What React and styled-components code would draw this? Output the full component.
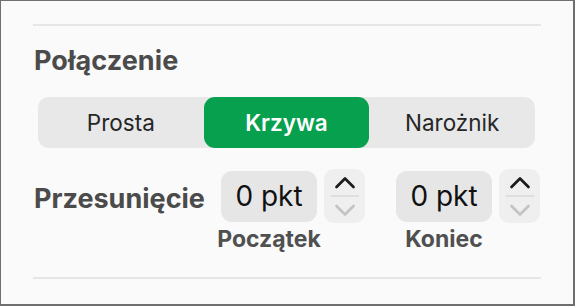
import React, { useState } from "react";
import styled, { createGlobalStyle } from "styled-components";

const GlobalStyle = createGlobalStyle`
  html, body {
    margin: 0;
    padding: 0;
    background: #fafafa;
  }
  * {
    box-sizing: border-box;
  }
`;

const Panel = styled.div`
  width: 575px;
  height: 306px;
  background: #fafafa;
  border: 1px solid #6f6f6f;
  border-right-width: 2px;
  border-bottom-width: 2px;
  padding: 23px 32px 0 32px;
  display: flex;
  flex-direction: column;
  font-family: Inter, "Noto Sans", sans-serif;
`;

const Divider = styled.div`
  height: 2px;
  background: #e6e6e6;
  margin-top: ${(p) => p.$top || 0}px;
`;

const Title = styled.h2`
  margin: 19px 0 0 1px;
  font-size: 27px;
  line-height: 32px;
  font-weight: 700;
  color: #4b4b4b;
  letter-spacing: 0.1px;
`;

const Segmented = styled.div`
  margin: 20px 6px 0 5px;
  height: 51px;
  display: grid;
  grid-template-columns: repeat(3, 1fr);
  background: #e8e8e8;
  border-radius: 11px;
`;

const Segment = styled.button`
  border: none;
  margin: 0;
  padding: 0;
  font-family: inherit;
  font-size: 22.5px;
  font-weight: ${(p) => (p.$active ? 600 : 400)};
  color: ${(p) => (p.$active ? "#ffffff" : "#262626")};
  background: ${(p) => (p.$active ? "#07a04e" : "transparent")};
  border-radius: 11px;
  cursor: pointer;
`;

const OffsetRow = styled.div`
  margin-top: 21px;
  display: flex;
  align-items: flex-start;
  gap: 31px;
`;

const RowLabel = styled.div`
  width: 157px;
  flex-shrink: 0;
  height: 54px;
  padding: 14px 0 0 1px;
  font-size: 27px;
  line-height: 32px;
  font-weight: 700;
  color: #4b4b4b;
  white-space: nowrap;
`;

const Field = styled.div`
  display: flex;
  flex-direction: column;
  flex-shrink: 0;
`;

const FieldControls = styled.div`
  display: flex;
  align-items: center;
  gap: 7px;
  height: 54px;
`;

const ValueBox = styled.div`
  width: 96px;
  height: 51px;
  border-radius: 11px;
  background: #e6e6e6;
  display: flex;
  align-items: center;
  justify-content: center;
  font-size: 28px;
  font-weight: 400;
  color: #111111;
`;

const SubLabel = styled.div`
  width: 96px;
  margin-top: 4px;
  text-align: center;
  font-size: 23px;
  line-height: 24px;
  font-weight: 700;
  color: #505050;
  white-space: nowrap;
  display: flex;
  justify-content: center;
`;

const Stepper = styled.div`
  width: 41px;
  height: 54px;
  border-radius: 10px;
  background: #efefef;
  display: flex;
  flex-direction: column;
  align-items: center;
`;

const StepButton = styled.button`
  border: none;
  background: transparent;
  padding: 0;
  margin: 0;
  width: 100%;
  height: 26px;
  display: flex;
  align-items: center;
  justify-content: center;
  cursor: pointer;
`;

const StepSeparator = styled.div`
  width: 28px;
  height: 2px;
  background: #dedede;
`;

const Chevron = ({ up, color }) => (
  <svg width="22" height="13" viewBox="0 0 22 13">
    <path
      d={up ? "M2.5 11 L11 2.5 L19.5 11" : "M2.5 2 L11 10.5 L19.5 2"}
      fill="none"
      stroke={color}
      strokeWidth="2.7"
      strokeLinecap="round"
      strokeLinejoin="round"
    />
  </svg>
);

const OffsetField = ({ label, value }) => (
  <Field>
    <FieldControls>
      <ValueBox>{value} pkt</ValueBox>
      <Stepper>
        <StepButton aria-label="Zwiększ">
          <Chevron up color="#1c1c1c" />
        </StepButton>
        <StepSeparator />
        <StepButton aria-label="Zmniejsz">
          <Chevron color="#c4c4c4" />
        </StepButton>
      </Stepper>
    </FieldControls>
    <SubLabel>{label}</SubLabel>
  </Field>
);

const options = ["Prosta", "Krzywa", "Narożnik"];

export default function App() {
  const [active, setActive] = useState("Krzywa");

  return (
    <>
      <GlobalStyle />
      <Panel>
        <Divider />
        <Title>Połączenie</Title>
        <Segmented>
          {options.map((o) => (
            <Segment key={o} $active={o === active} onClick={() => setActive(o)}>
              {o}
            </Segment>
          ))}
        </Segmented>
        <OffsetRow>
          <RowLabel>Przesunięcie</RowLabel>
          <OffsetField label="Początek" value={0} />
          <OffsetField label="Koniec" value={0} />
        </OffsetRow>
        <Divider $top={26} />
      </Panel>
    </>
  );
}
